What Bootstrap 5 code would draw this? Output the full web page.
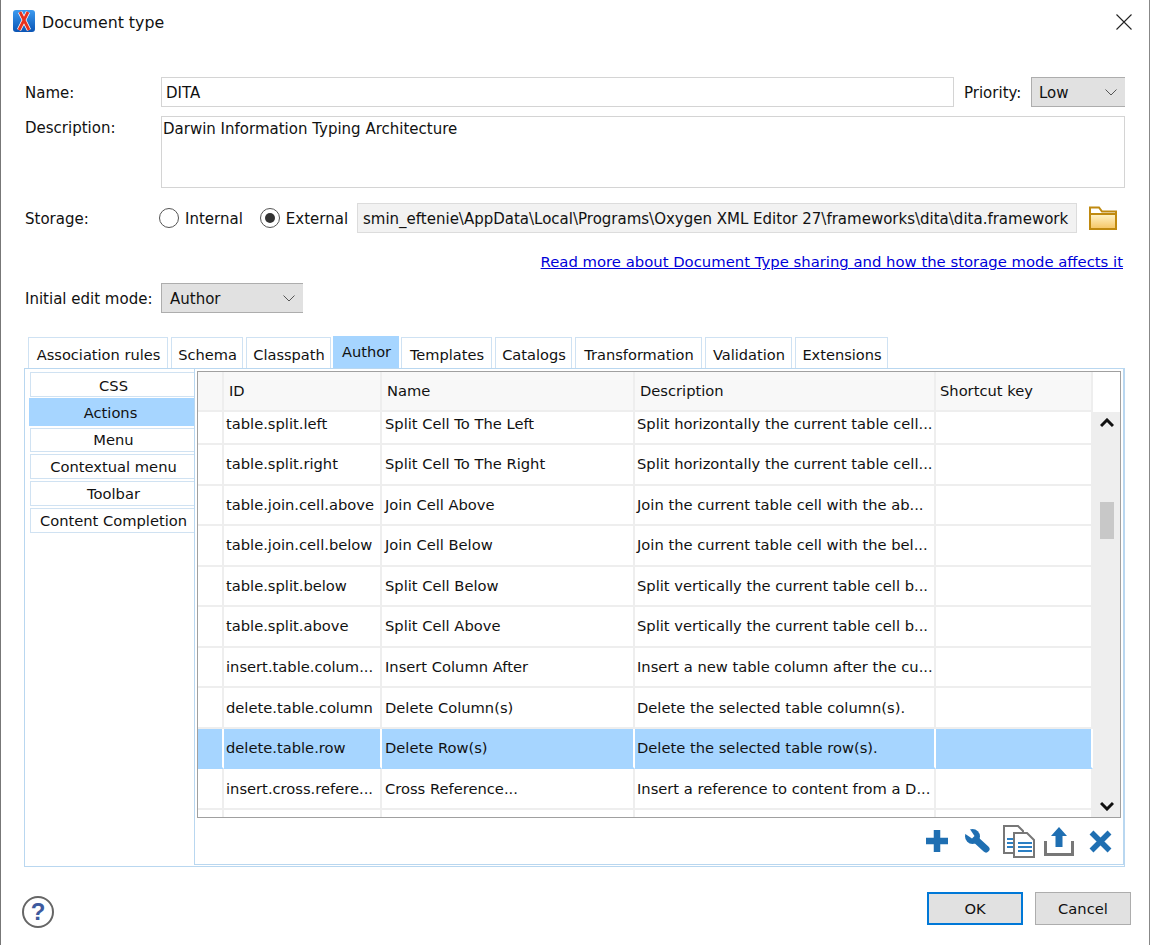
<!DOCTYPE html>
<html lang="en">
<head>
<meta charset="utf-8">
<title>Document type</title>
<link rel="stylesheet" href="https://cdn.jsdelivr.net/npm/bootstrap@5.3.0/dist/css/bootstrap.min.css">
<style>
html,body{margin:0;height:945px;overflow:hidden;background:#fff}
body{font-family:"DejaVu Sans","Noto Sans",sans-serif;font-size:15px;line-height:18px;color:#111}
.dlg{width:1150px;height:945px;border-left:1px solid #777;border-right:1px solid #888;position:relative}
.titlebar{height:46px;padding:10px 17px 0 12px;font-size:15.8px}
.title-txt{margin-left:7px;padding-top:3px}
.frm{padding:31px 24px 0 24px}
.lbl{width:136px;flex:none;padding-top:2px}
.field{border:1px solid #d4d4d4;background:#fff;height:30px;padding:0 4px;line-height:30px;width:793px;flex:none}
.fake-sel{background:#e1e1e1;border:1px solid #adadad;border-right:0;height:30px;line-height:30px;display:flex;justify-content:space-between;align-items:center}
.fake-sel span{padding-top:2px}
.row-name{height:30px}
.pri-l{margin-left:10px;padding-top:2px}
.w-pri{width:94px;padding:0 8px 0 7px;margin-left:auto}
.row-desc{margin-top:9px;height:72px}
.row-desc .lbl{padding-top:3px}
.desc-box{flex:1;border:1px solid #d4d4d4;padding:2px 0 0 1px;line-height:20px}
.row-stor{margin-top:15px;height:30px}
.radio-c{width:20px;height:20px;border:1px solid #555;border-radius:50%;flex:none;display:flex;align-items:center;justify-content:center;margin-left:-2px}
.radio-c i{width:10px;height:10px;border-radius:50%;background:#333;display:block}
.rad-t{margin-left:6px;padding-top:2px}
.rad-t1{margin-right:19px}
.path{width:720px;background:#f2f2f2;border:1px solid #dcdcdc;height:30px;line-height:30px;padding:0 5px;white-space:nowrap;overflow:hidden;flex:none;position:absolute;left:356px}
.fold{position:absolute;left:1088px}
.row-link{height:41px;text-align:right;padding:15px 2px 0 0;line-height:28px;font-size:14.83px}
.row-link a{color:#0000d8}
.row-mode{margin-top:9px;height:30px}
.w-mode{width:142px;padding:0 8px}
.tabstrip{margin:23px 0 0 3px;height:32px;align-items:flex-end;gap:3px;font-size:14.6px}
.tb{height:31px;border:1px solid #cfe2f3;border-bottom:0;text-align:center;line-height:33px;white-space:nowrap;background:#fff;padding-left:1px}
.tb-on{height:32px;background:#a6d5ff;border-color:#a6d5ff;line-height:30px;margin-left:-1px;margin-right:-1px}
.w1{width:140px}.w2{width:72px}.w3{width:85px}.w4{width:66px}.w5{width:91px}.w6{width:77px}.w7{width:127px}.w8{width:87px}.w9{width:93px}
.tabpanel{height:499px;border:1px solid #b9d7f0;padding:3px 1px 1px 4px;width:1101px;margin-left:-1px;font-size:14.7px}
.side{width:165px;flex:none}
.stb{height:25px;margin:0 0 2px 1px;border:1px solid #d0e2f2;border-right:0;text-align:center;line-height:23px;white-space:nowrap;padding-left:2px}
.stb-c{line-height:25px}
.stb-on{background:#a6d5ff;border-color:#a6d5ff;height:28px;line-height:28px;margin:-1px 0 2px 0;padding:0 3px 0 0}
.stb-m{height:24px;line-height:21px}
.inner{flex:1;margin-top:-3px;border:1px solid #b9d7f0;border-top:0;padding:2px 2px 0 2px;height:496px}
.grid-wrap{border:1px solid #a0a0a0;height:447px;overflow:hidden}
.hdr,.bodyt{table-layout:fixed;border-collapse:separate;border-spacing:0;margin:0}
.hdr{width:922px}
.hdr td{background:#f8f8f8;height:38px;padding:0 0 0 5px;border-right:2px solid #eee;border-bottom:2px solid #eee;white-space:nowrap;line-height:38px}
.hdr td.sk{padding-left:4px}
.hdr td.cor{background:#fff;border:0}
.bodyt{width:895px}
.bodyt td{padding:0 0 0 2px;height:40.5px;border-right:2px solid #eee;border-bottom:2px solid #eee;white-space:nowrap;overflow:hidden;background:#fff}
.bodyt td.nm{padding-left:3px}
.bodyt tr.r1 td{height:33px;padding-bottom:7px}
.bodyt tr.rl td{height:10px;border-bottom:0}
.bodyt tr.sel td{background:#a6d5ff;border-right-color:#fff;border-bottom-color:#a6d5ff}
.sbar{width:27px;height:408px;background:#eee;display:flex;flex-direction:column;align-items:center;flex:none}
.aup{margin-top:6px}
.adn{margin-bottom:9px}
.thumb{width:14px;height:37px;background:#c8c8c8;margin-top:74px;margin-bottom:auto}
.tools{height:46px;padding:0 9px 0 0;align-items:center;justify-content:flex-end}
.t2{margin-left:17px}.t3{margin-left:13px}.t4{margin-left:9px}.t5{margin-left:15px}
.foot{padding:25px 18px 0 21px;align-items:flex-start;justify-content:space-between}
.help{margin-top:4px}
.btns{gap:12px}
.bt{width:96px;height:33px;background:#e1e1e1;border:1px solid #adadad;border-radius:0;color:#111;font-size:14.7px;padding:0;line-height:30px}
.bt-def{border:2px solid #0078d7}
</style>
</head>
<body>
<div class="dlg">
  <div class="titlebar d-flex align-items-start justify-content-between">
    <div class="d-flex align-items-center">
      <svg width="22" height="22" viewBox="0 0 22 22"><defs><linearGradient id="lg" x1="0" y1="0" x2="0" y2="1"><stop offset="0" stop-color="#3d9bf0"/><stop offset="1" stop-color="#0a55b5"/></linearGradient></defs><rect width="22" height="22" rx="3" fill="url(#lg)"/><path d="M7 2 L16 20 M15 2 L6 20" stroke="#fff" stroke-width="4.4" fill="none"/><path d="M7 2 L16 20 M15 2 L6 20" stroke="#e8321e" stroke-width="2.8" fill="none"/></svg>
      <span class="title-txt">Document type</span>
    </div>
    <svg class="mt-1" width="16" height="16" viewBox="0 0 16 16"><path d="M.5.5l15 15M15.500.5l-15 15" stroke="#222" stroke-width="1.1"/></svg>
  </div>
  <div class="frm">
    <div class="d-flex align-items-center row-name">
      <div class="lbl">Name:</div>
      <div class="field">DITA</div>
      <div class="pri-l">Priority:</div>
      <div class="fake-sel w-pri"><span>Low</span><svg width="12" height="7" viewBox="0 0 12 7"><path d="M.5.5L6 6l5.500-5.500" fill="none" stroke="#555"/></svg></div>
    </div>
    <div class="d-flex row-desc">
      <div class="lbl">Description:</div>
      <div class="desc-box">Darwin Information Typing Architecture</div>
    </div>
    <div class="d-flex align-items-center row-stor">
      <div class="lbl">Storage:</div>
      <span class="radio-c"></span><span class="rad-t rad-t1">Internal</span>
      <span class="radio-c"><i></i></span><span class="rad-t">External</span>
      <div class="path">smin_eftenie\AppData\Local\Programs\Oxygen XML Editor 27\frameworks\dita\dita.framework</div>
      <svg class="fold" width="28" height="24" viewBox="0 0 28 24"><defs><linearGradient id="fg" x1="0" y1="0" x2="0" y2="1"><stop offset="0" stop-color="#fff3c8"/><stop offset="1" stop-color="#f5c563"/></linearGradient></defs><path d="M1 23V1.500h9l3 4h14V23z" fill="#fff" stroke="#c08a10" stroke-width="2"/><rect x="1" y="8" width="26" height="15" fill="url(#fg)" stroke="#c08a10" stroke-width="2"/></svg>
    </div>
    <div class="row-link"><a href="#">Read more about Document Type sharing and how the storage mode affects it</a></div>
    <div class="d-flex align-items-center row-mode">
      <div class="lbl">Initial edit mode:</div>
      <div class="fake-sel w-mode"><span>Author</span><svg width="12" height="7" viewBox="0 0 12 7"><path d="M.5.5L6 6l5.500-5.500" fill="none" stroke="#555"/></svg></div>
    </div>
    <div class="d-flex tabstrip">
      <div class="tb w1">Association rules</div>
      <div class="tb w2">Schema</div>
      <div class="tb w3">Classpath</div>
      <div class="tb tb-on w4">Author</div>
      <div class="tb w5">Templates</div>
      <div class="tb w6">Catalogs</div>
      <div class="tb w7">Transformation</div>
      <div class="tb w8">Validation</div>
      <div class="tb w9">Extensions</div>
    </div>
    <div class="tabpanel d-flex">
      <div class="side">
        <div class="stb stb-c">CSS</div>
        <div class="stb stb-on">Actions</div>
        <div class="stb stb-m">Menu</div>
        <div class="stb">Contextual menu</div>
        <div class="stb">Toolbar</div>
        <div class="stb">Content Completion</div>
      </div>
      <div class="inner">
        <div class="grid-wrap">
          <table class="hdr">
            <colgroup><col style="width:26px"><col style="width:158px"><col style="width:253px"><col style="width:301px"><col style="width:157px"><col style="width:27px"></colgroup>
            <tr><td></td><td>ID</td><td>Name</td><td>Description</td><td class="sk">Shortcut key</td><td class="cor"></td></tr>
          </table>
          <div class="d-flex">
            <table class="bodyt">
              <colgroup><col style="width:26px"><col style="width:158px"><col style="width:253px"><col style="width:301px"><col style="width:157px"></colgroup>
              <tr class="r1"><td></td><td>table.split.left</td><td class="nm">Split Cell To The Left</td><td>Split horizontally the current table cell...</td><td></td></tr>
              <tr><td></td><td>table.split.right</td><td class="nm">Split Cell To The Right</td><td>Split horizontally the current table cell...</td><td></td></tr>
              <tr><td></td><td>table.join.cell.above</td><td class="nm">Join Cell Above</td><td>Join the current table cell with the ab...</td><td></td></tr>
              <tr><td></td><td>table.join.cell.below</td><td class="nm">Join Cell Below</td><td>Join the current table cell with the bel...</td><td></td></tr>
              <tr><td></td><td>table.split.below</td><td class="nm">Split Cell Below</td><td>Split vertically the current table cell b...</td><td></td></tr>
              <tr><td></td><td>table.split.above</td><td class="nm">Split Cell Above</td><td>Split vertically the current table cell b...</td><td></td></tr>
              <tr><td></td><td>insert.table.colum...</td><td class="nm">Insert Column After</td><td>Insert a new table column after the cu...</td><td></td></tr>
              <tr><td></td><td>delete.table.column</td><td class="nm">Delete Column(s)</td><td>Delete the selected table column(s).</td><td></td></tr>
              <tr class="sel"><td></td><td>delete.table.row</td><td class="nm">Delete Row(s)</td><td>Delete the selected table row(s).</td><td></td></tr>
              <tr><td></td><td>insert.cross.refere...</td><td class="nm">Cross Reference...</td><td>Insert a reference to content from a D...</td><td></td></tr>
              <tr class="rl"><td></td><td></td><td></td><td></td><td></td></tr>
            </table>
            <div class="sbar">
              <svg class="aup" width="14" height="10" viewBox="0 0 14 10"><path d="M1 8l6-6 6 6" fill="none" stroke="#111" stroke-width="3"/></svg>
              <div class="thumb"></div>
              <svg class="adn" width="14" height="10" viewBox="0 0 14 10"><path d="M1 2l6 6 6-6" fill="none" stroke="#111" stroke-width="3"/></svg>
            </div>
          </div>
        </div>
        <div class="d-flex tools">
          <svg width="22" height="22" viewBox="0 0 22 22"><path d="M11 0v22M0 11h22" stroke="#1f6fb2" stroke-width="6.500" fill="none"/></svg>
          <svg class="t2" width="25" height="24" viewBox="0 0 25 24"><circle cx="7.500" cy="7.500" r="7.500" fill="#1f6fb2"/><path d="M9 9L21 20" stroke="#1f6fb2" stroke-width="7" stroke-linecap="round"/><path d="M9.500 7L3.500-2-2 3.500 7 9.500z" fill="#fff"/></svg>
          <svg class="t3" width="32" height="33" viewBox="0 0 32 33"><path d="M1 1h14l5 5v22H1z" fill="#fff" stroke="#777" stroke-width="2"/><path d="M4 14h8M4 18h8M4 22h8" stroke="#2b7fc4" stroke-width="2"/><path d="M11 8h13l7 7v17H11z" fill="#fff" stroke="#777" stroke-width="2"/><path d="M15 18h14M15 22h14M15 26h14" stroke="#2b7fc4" stroke-width="2"/></svg>
          <svg class="t4" width="30" height="29" viewBox="0 0 30 29"><path d="M1.500 14v13.500h27V14" fill="none" stroke="#777" stroke-width="3"/><path d="M15 0l8 9h-4.500v11h-7V9H7z" fill="#1f6fb2"/></svg>
          <svg class="t5" width="23" height="23" viewBox="0 0 23 23"><path d="M2.500 2.500l18 18M20.500 2.500l-18 18" stroke="#1f6fb2" stroke-width="5.500" fill="none"/></svg>
        </div>
      </div>
    </div>
  </div>
  <div class="d-flex foot">
    <svg class="help" width="32" height="32" viewBox="0 0 32 32"><circle cx="16" cy="16" r="15" fill="#fff" stroke="#666" stroke-width="2"/><text x="16" y="24" text-anchor="middle" font-family="Liberation Sans" font-weight="700" font-size="24" fill="#3d5a9e">?</text></svg>
    <div class="d-flex btns">
      <button class="bt bt-def">OK</button>
      <button class="bt">Cancel</button>
    </div>
  </div>
</div>
</body>
</html>
